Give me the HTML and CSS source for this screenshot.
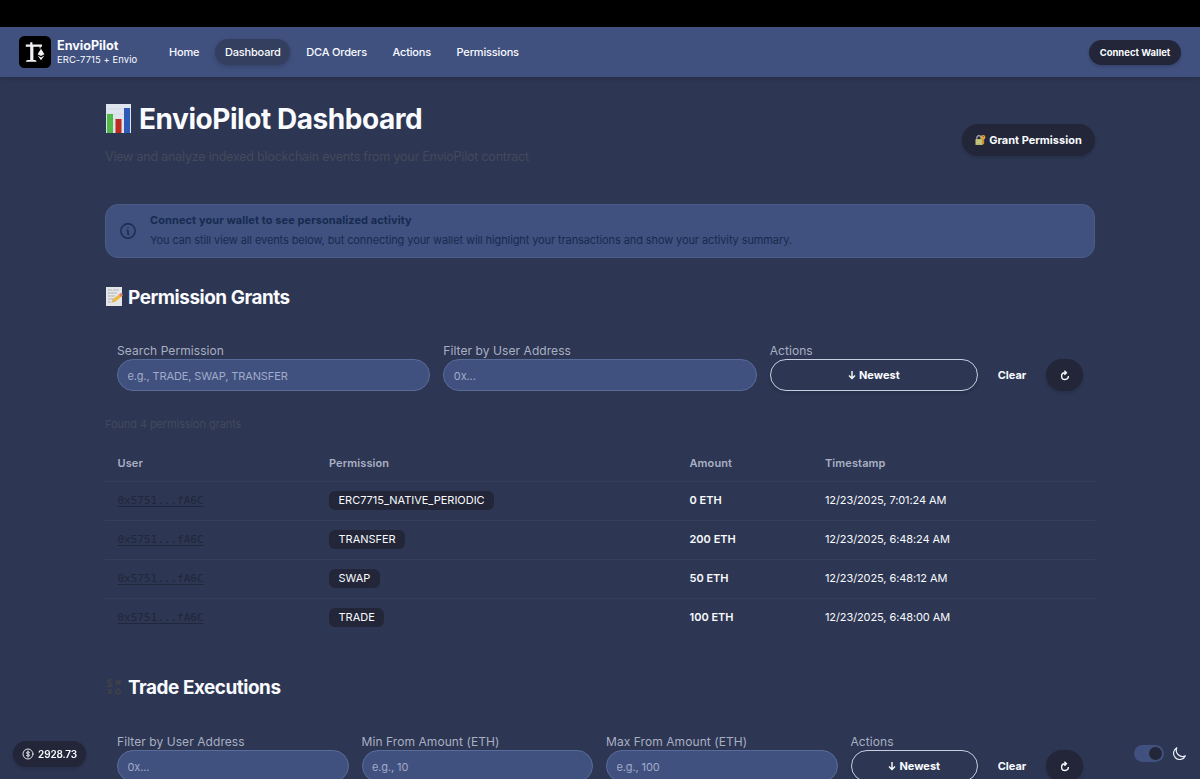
FILE: index.html
```html
<!DOCTYPE html>
<html lang="en">
<head>
<meta charset="utf-8">
<title>EnvioPilot Dashboard</title>
<link rel="stylesheet" href="styles.css">
</head>
<body>
<div class="topstrip"></div>
<header class="navbar">
  <a class="brand">
    <svg class="logo" viewBox="0 0 32 32"><rect width="32" height="32" rx="5.5" fill="#000"/><path d="M6.800 8.600h4.400V6.200h2.200v2.400h9.600v2.200h-1.400v1.600h-1v-1.600h-6.200v13.100h1.600c.9 0 1.500.7 1.500 1.900H7c0-1.200.6-1.900 1.500-1.900h2.700V10.800H6.800z" fill="#f2f2f2"/><path d="M22 12.800l3.400 5.400-3.400 1.900-3.400-1.900zM18.600 19.600l3.400 1.900 3.400-1.900-3.400 4.600z" fill="#f2f2f2"/></svg>
    <span class="brand-text"><b class="brand-name">EnvioPilot</b><span class="brand-sub">ERC-7715 + Envio</span></span>
  </a>
  <nav class="menu">
    <a class="link">Home</a><a class="link active">Dashboard</a><a class="link">DCA Orders</a><a class="link">Actions</a><a class="link">Permissions</a>
  </nav>
  <button class="btn connect">Connect Wallet</button>
</header>
<main class="page">
  <section class="hero">
    <div>
      <h1 class="title"><svg class="chart" viewBox="0 0 26 30"><rect x="1" y="0" width="25" height="29" fill="#dfe5ef"/><path d="M1 5h25M1 10h25M1 15h25M1 20h25M1 25h25" stroke="#ced7e4" stroke-width=".7"/><rect x="2" y="10" width="6" height="19" fill="#50b948"/><rect x="10.500" y="15" width="6" height="14" fill="#bd2a20"/><rect x="19" y="4" width="6" height="25" fill="#2c5cb8"/></svg><span>EnvioPilot Dashboard</span></h1>
      <p class="subtitle">View and analyze indexed blockchain events from your EnvioPilot contract</p>
    </div>
    <button class="btn grant"><svg class="lock" viewBox="0 0 12 12"><path d="M2 6V3.500a2.300 2.300 0 0 1 4.600 0V6" fill="none" stroke="#a9b2bb" stroke-width="1.200"/><rect x=".5" y="5" width="8" height="6.500" rx=".7" fill="#b7b96c"/><path d="M1 7h7M1 9h7" stroke="#d8d48c" stroke-width=".8"/><circle cx="8.800" cy="3" r="2.500" fill="#e8a33c"/><circle cx="9" cy="2.200" r=".7" fill="#684823"/><path d="M9.200 5v5.500" stroke="#d98b2b" stroke-width="1.600"/></svg><span>Grant Permission</span></button>
  </section>
  <section class="alert">
    <svg class="info" viewBox="0 0 18 18" fill="none" stroke="#162b4f" stroke-width="1.400" stroke-linecap="round" stroke-linejoin="round"><circle cx="9" cy="9" r="7.200"/><path d="M8.200 8.500H9v3.800h.8M9 5.700v.1"/></svg>
    <div class="alert-body"><h3 class="alert-title">Connect your wallet to see personalized activity</h3><p class="alert-text">You can still view all events below, but connecting your wallet will highlight your transactions and show your activity summary.</p></div>
  </section>
  <section class="block">
    <h2 class="heading"><svg class="memo" viewBox="0 0 18 20"><rect x="1" y="0" width="16" height="19" fill="#e4e6e8"/><path d="M3 3h4M8 3h6M3 6h9M3 9h7M3 12h6M3 15h3" stroke="#a7abb0" stroke-width="1" stroke-dasharray="2.500 .6"/><path d="M6.500 15.500l1.300-3.300 7.400-5.700 2.100 2.600-7.500 5.900z" fill="#efb83c"/><path d="M14 7.400l1.700-1.200c1-.5 2.700 1.500 1.900 2.300l-1.500 1.300z" fill="#dd7a78"/><path d="M6.500 15.500l1.300-3.300 2 2.600z" fill="#d5b88b"/></svg><span>Permission Grants</span></h2>
    <div class="filters three">
      <label class="field">Search Permission<input class="input" placeholder="e.g., TRADE, SWAP, TRANSFER"></label>
      <label class="field">Filter by User Address<input class="input" placeholder="0x..."></label>
      <div class="field">Actions
        <div class="actions"><button class="btn outline"><svg class="arrow" viewBox="0 0 8 10"><path d="M4 1v7.500M1 5.500l3 3 3-3"/></svg>Newest</button><button class="btn ghost">Clear</button><button class="btn round"><svg class="reload" viewBox="0 0 10 11"><path d="M6 2.700H4.900a3.400 3.400 0 1 0 3.500 3.400M4.400.7l2 2-2 2"/></svg></button></div>
      </div>
    </div>
    <p class="found">Found 4 permission grants</p>
    <table class="table">
      <thead><tr><th class="c1">User</th><th class="c2">Permission</th><th class="c3">Amount</th><th>Timestamp</th></tr></thead>
      <tbody>
        <tr><td><a class="addr">0x5751...fA6C</a></td><td><span class="badge">ERC7715_NATIVE_PERIODIC</span></td><td class="amount">0 ETH</td><td class="time">12/23/2025, 7:01:24 AM</td></tr>
        <tr><td><a class="addr">0x5751...fA6C</a></td><td><span class="badge">TRANSFER</span></td><td class="amount">200 ETH</td><td class="time">12/23/2025, 6:48:24 AM</td></tr>
        <tr><td><a class="addr">0x5751...fA6C</a></td><td><span class="badge">SWAP</span></td><td class="amount">50 ETH</td><td class="time">12/23/2025, 6:48:12 AM</td></tr>
        <tr><td><a class="addr">0x5751...fA6C</a></td><td><span class="badge">TRADE</span></td><td class="amount">100 ETH</td><td class="time">12/23/2025, 6:48:00 AM</td></tr>
      </tbody>
    </table>
  </section>
  <section class="block trades">
    <h2 class="heading"><svg class="memo" viewBox="0 0 18 20" fill="none" stroke="#414248" stroke-width="1.300"><path d="M7 3.500C5.500 2 2.500 2.600 2.700 4.500S7 6 7 8s-3.500 2.300-4.800.8M4.800 1.500v9M11 3l4.500 5M15.500 3L11 8M10.500 5.500h5.500M3 12l4 5M7 12l-4 5"/><path d="M13.200 11.500l2.800 3-2.800 3-2.800-3z"/></svg><span>Trade Executions</span></h2>
    <div class="filters four">
      <label class="field">Filter by User Address<input class="input" placeholder="0x..."></label>
      <label class="field">Min From Amount (ETH)<input class="input" placeholder="e.g., 10"></label>
      <label class="field">Max From Amount (ETH)<input class="input" placeholder="e.g., 100"></label>
      <div class="field">Actions
        <div class="actions"><button class="btn outline"><svg class="arrow" viewBox="0 0 8 10"><path d="M4 1v7.500M1 5.500l3 3 3-3"/></svg>Newest</button><button class="btn ghost">Clear</button><button class="btn round"><svg class="reload" viewBox="0 0 10 11"><path d="M6 2.700H4.900a3.400 3.400 0 1 0 3.500 3.400M4.400.7l2 2-2 2"/></svg></button></div>
      </div>
    </div>
  </section>
</main>
<div class="btn price"><svg class="coin" viewBox="0 0 12 12" fill="none" stroke="#f4f6fb" stroke-width=".9" stroke-linecap="round"><circle cx="6" cy="6" r="5"/><path d="M7.600 4.500C7 3.500 4.500 3.600 4.500 4.900S7.600 5.900 7.600 7.200 5 8.500 4.300 7.400M6 2.900v6.200"/></svg><span>2928.73</span></div>
<div class="theme"><span class="toggle"><span class="knob"></span></span><svg class="moon" viewBox="0 0 16 16" fill="none" stroke="#edf1fb" stroke-width="1.200" stroke-linejoin="round"><path d="M5.800 1.800a6.200 6.200 0 1 0 8.500 8.100A6.300 6.300 0 0 1 5.800 1.800z"/></svg></div>
</body>
</html>
```

FILE: styles.css
```css
* { box-sizing: border-box; margin: 0; }
body { height: 779px; overflow: hidden; background: #2d3652; color: #f9fbff; font-family: Inter, "Liberation Sans", sans-serif; font-size: 11px; }
button, input { font: inherit; color: inherit; }
svg { display: block; flex: none; }
.topstrip { height: 27px; background: #000; }
.navbar { height: 50px; background: #40517f; display: flex; align-items: center; padding: 0 19px; box-shadow: 0 1px 3px rgba(20, 26, 45, .35); }
.brand { display: flex; align-items: center; gap: 6px; width: 140.500px; }
.logo { width: 32px; height: 32px; }
.brand-text { display: flex; flex-direction: column; white-space: nowrap; }
.brand-name { font-size: 12.600px; line-height: 15px; letter-spacing: 0; }
.brand-sub { font-size: 9.450px; line-height: 14px; letter-spacing: .07px; }
.menu { display: flex; gap: 6.500px; }
.link { height: 26px; line-height: 26px; padding: 0 9.500px; border-radius: 13px; font-size: 11px; font-weight: 500; letter-spacing: -.17px; }
.link.active { background: #343f5f; box-shadow: 0 2px 4px rgba(20, 26, 45, .25); }
.btn { display: flex; align-items: center; justify-content: center; border: 0; padding: 0; background: #222638; font-weight: 700; font-size: 11px; border-radius: 16px; box-shadow: 0 2px 3px rgba(15, 20, 38, .2); white-space: nowrap; }
.connect { width: 92px; height: 25px; margin-left: auto; font-size: 9.450px; letter-spacing: .03px; }
.page { width: 990px; margin: 0 auto; }
.hero { display: flex; justify-content: space-between; padding-top: 24px; height: 127px; }
.title { display: flex; align-items: center; gap: 8px; height: 36px; font-size: 28px; letter-spacing: -.45px; }
.chart { width: 26px; height: 30px; }
.subtitle { margin-top: 11px; font-size: 12.600px; line-height: 18px; letter-spacing: -.25px; color: #434a5c; }
.grant { width: 133px; height: 32px; margin-top: 23px; gap: 3px; }
.lock { width: 11px; height: 12px; }
.alert { height: 54px; display: flex; align-items: center; padding-left: 13px; gap: 13px; background: #40517f; border: 1px solid #4c5c88; border-radius: 13px; color: #162b4f; }
.info { width: 18px; height: 18px; }
.alert-body { padding-bottom: 2px; }
.alert-title { font-size: 11px; line-height: 20px; letter-spacing: .08px; }
.alert-text { font-size: 11px; line-height: 20px; letter-spacing: -.1px; }
.block { padding-top: 26px; }
.heading { display: flex; align-items: center; gap: 5px; height: 26px; font-size: 18.900px; letter-spacing: -.45px; }
.memo { width: 18px; height: 20px; }
.filters { display: grid; gap: 13px; padding: 0 12px; margin-top: 32px; }
.three { grid-template-columns: repeat(3, 1fr); }
.four { grid-template-columns: 231.500px 231.500px 231.500px 1fr; }
.field { font-size: 12px; line-height: 17px; letter-spacing: .07px; color: #a9b0c4; }
.input { display: block; width: 100%; height: 32px; border: 1px solid #596b9b; border-radius: 16px; background: #40517f; padding: 1px 9.500px 0; font-size: 11px; letter-spacing: -.12px; }
.input::placeholder { color: #a0abc9; opacity: 1; }
.actions { display: flex; gap: 6.500px; height: 32px; color: #f9fbff; }
.outline { flex: 1; border: 1px solid #c7cedf; background: transparent; gap: 3px; }
.ghost { width: 55px; background: transparent; box-shadow: none; }
.round { width: 37px; }
.arrow { width: 8px; height: 10px; fill: none; stroke: currentColor; stroke-width: 1.400; }
.reload { width: 10px; height: 11px; fill: none; stroke: currentColor; stroke-width: 1.400; }
.found { margin-top: 25px; font-size: 11px; line-height: 17px; letter-spacing: -.1px; color: #434a5f; }
.table { width: 100%; margin-top: 10px; border-collapse: collapse; table-layout: fixed; font-size: 11px; }
.table th { height: 38px; padding: 2px 12.500px 0; text-align: left; color: #a9b0c4; font-weight: 600; letter-spacing: .1px; border-bottom: 1px solid #353f5b; }
.table td { height: 39px; padding: 0 12.500px 1px; border-bottom: 1px solid #353f5b; }
.table tr:last-child td { border-bottom: 0; }
.c1 { width: 211.500px; }
.c2 { width: 360.500px; }
.c3 { width: 135.500px; }
.addr { font-family: "DejaVu Sans Mono", monospace; font-size: 11px; color: #20273b; text-decoration: underline; text-underline-offset: 2px; }
.badge { display: inline-block; vertical-align: middle; height: 19px; line-height: 19px; padding: 0 9.500px; border-radius: 6px; background: #222638; letter-spacing: -.02px; }
.amount { font-weight: 600; }
.time { letter-spacing: -.1px; }
.trades { padding-top: 37px; }
.trades .filters { margin-top: 33px; }
.price { position: fixed; left: 13px; top: 741px; width: 73px; height: 26px; gap: 4px; font-size: 10px; font-weight: 600; letter-spacing: -.17px; }
.coin { width: 12px; height: 12px; }
.theme { position: fixed; left: 1134px; top: 745px; display: flex; align-items: center; gap: 7px; height: 17px; }
.toggle { display: flex; align-items: center; justify-content: flex-end; width: 30px; height: 17px; padding: 2px; border-radius: 9px; background: #40517f; }
.knob { width: 13px; height: 13px; border-radius: 50%; background: #222638; }
.moon { width: 16px; height: 16px; }
```
